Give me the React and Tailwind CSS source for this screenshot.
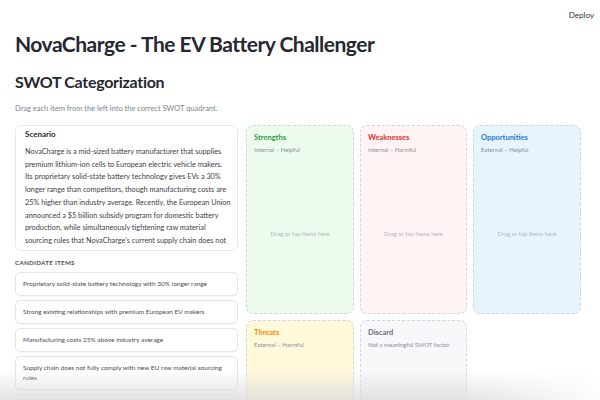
const items = [
  "Proprietary solid-state battery technology with 30% longer range",
  "Strong existing relationships with premium European EV makers",
  "Manufacturing costs 25% above industry average",
  "Supply chain does not fully comply with new EU raw material sourcing rules",
  "Chinese competitor announces aggressive price cuts in Europe",
];

// scenario copy, broken the way the panel wraps it
const scenario = [
  "NovaCharge is a mid-sized battery manufacturer that supplies",
  "premium lithium-ion cells to European electric vehicle makers.",
  "Its proprietary solid-state battery technology gives EVs a 30%",
  "longer range than competitors, though manufacturing costs are",
  "25% higher than industry average. Recently, the European Union",
  "announced a $5 billion subsidy program for domestic battery",
  "production, while simultaneously tightening raw material",
  "sourcing rules that NovaCharge's current supply chain does not",
  "fully comply with. Meanwhile, a large Chinese competitor has",
];

const zones = [
  { title: "Strengths", sub: "Internal – Helpful", box: "bg-[#ecfbee]", head: "text-[#2f9e44]" },
  { title: "Weaknesses", sub: "Internal – Harmful", box: "bg-[#fff3f3]", head: "text-[#e03131]" },
  { title: "Opportunities", sub: "External – Helpful", box: "bg-[#e7f4fe]", head: "text-[#1c7ed6]" },
];

const Zone = ({ title, sub, box, head, tall, hint }) => (
  <div
    className={`${box} ${tall ? "h-[189px]" : "h-[100px]"} rounded-[7px] border border-dashed border-[#d3d7dd] px-[7px] pt-[7px] flex flex-col`}
  >
    <div className={`${head} text-[7.5px] font-bold leading-[10px]`}>{title}</div>
    <div className="text-[6px] text-[#8a8f98] mt-[3px] leading-[8px]">{sub}</div>
    {hint && (
      <div className="flex-1 flex items-center justify-center text-[6px] text-[#b3b8c0]">
        Drag or tap items here
      </div>
    )}
  </div>
);

export default function App() {
  return (
    <div className="relative w-[600px] h-[400px] overflow-hidden bg-white text-[#31333f] font-['Lato',sans-serif]">
      <div className="flex justify-end pr-[6px] pt-[9px] text-[8px] text-[#31333f]">Deploy</div>

      <div className="px-[15px]">
        <h1 className="mt-[9px] text-[21px] font-bold tracking-[-0.5px] leading-[28px] text-[#262730]">
          NovaCharge - The EV Battery Challenger
        </h1>
        <h2 className="mt-[13px] text-[16px] font-bold tracking-[-0.3px] leading-[22px] text-[#262730]">
          SWOT Categorization
        </h2>
        <p className="mt-[11px] text-[7.5px] text-[#808495] leading-[10px]">
          Drag each item from the left into the correct SWOT quadrant.
        </p>

        <div className="mt-[11px] flex gap-[8px]">
          {/* left column: scenario + candidates */}
          <div className="w-[223px] shrink-0">
            <div className="h-[126px] overflow-hidden rounded-[6px] border border-[#e6e8ec] px-[9px] pt-[2px]">
              <div className="text-[8px] font-bold text-[#262730] leading-[12px]">Scenario</div>
              <div className="mt-[6px] text-[7.3px] leading-[12.7px] text-[#3d4049]">
                {scenario.map((l) => (
                  <div key={l} className="whitespace-nowrap">
                    {l}
                  </div>
                ))}
              </div>
            </div>

            <div className="mt-[8px] text-[6.2px] font-bold tracking-[0.3px] text-[#4a4d57] leading-[8px]">
              CANDIDATE ITEMS
            </div>
            <div className="mt-[5px] flex flex-col gap-[4px]">
              {items.map((t) => (
                <div
                  key={t}
                  className="rounded-[5px] border border-[#e3e5e9] bg-white px-[7px] py-[6px] text-[6.5px] leading-[10px] text-[#4a4d57] shadow-[0_1px_1px_rgba(0,0,0,0.03)]"
                >
                  {t}
                </div>
              ))}
            </div>
          </div>

          {/* quadrant grid */}
          <div className="grid grid-cols-[108px_107px_108px] gap-x-[6px] gap-y-[6px] content-start">
            {zones.map((z) => (
              <Zone key={z.title} {...z} tall hint />
            ))}
            <Zone title="Threats" sub="External – Harmful" box="bg-[#fff8da]" head="text-[#f08c00]" />
            <Zone title="Discard" sub="Not a meaningful SWOT factor" box="bg-[#f7f8fa]" head="text-[#6b6f78]" />
          </div>
        </div>
      </div>

      {/* bottom fade */}
      <div className="pointer-events-none absolute bottom-0 left-0 h-[30px] w-[600px] bg-gradient-to-b from-transparent to-[#dcdcdc]/80" />
      <div className="pointer-events-none absolute bottom-0 right-0 h-[30px] w-[140px] bg-gradient-to-r from-transparent to-white/90" />
    </div>
  );
}
